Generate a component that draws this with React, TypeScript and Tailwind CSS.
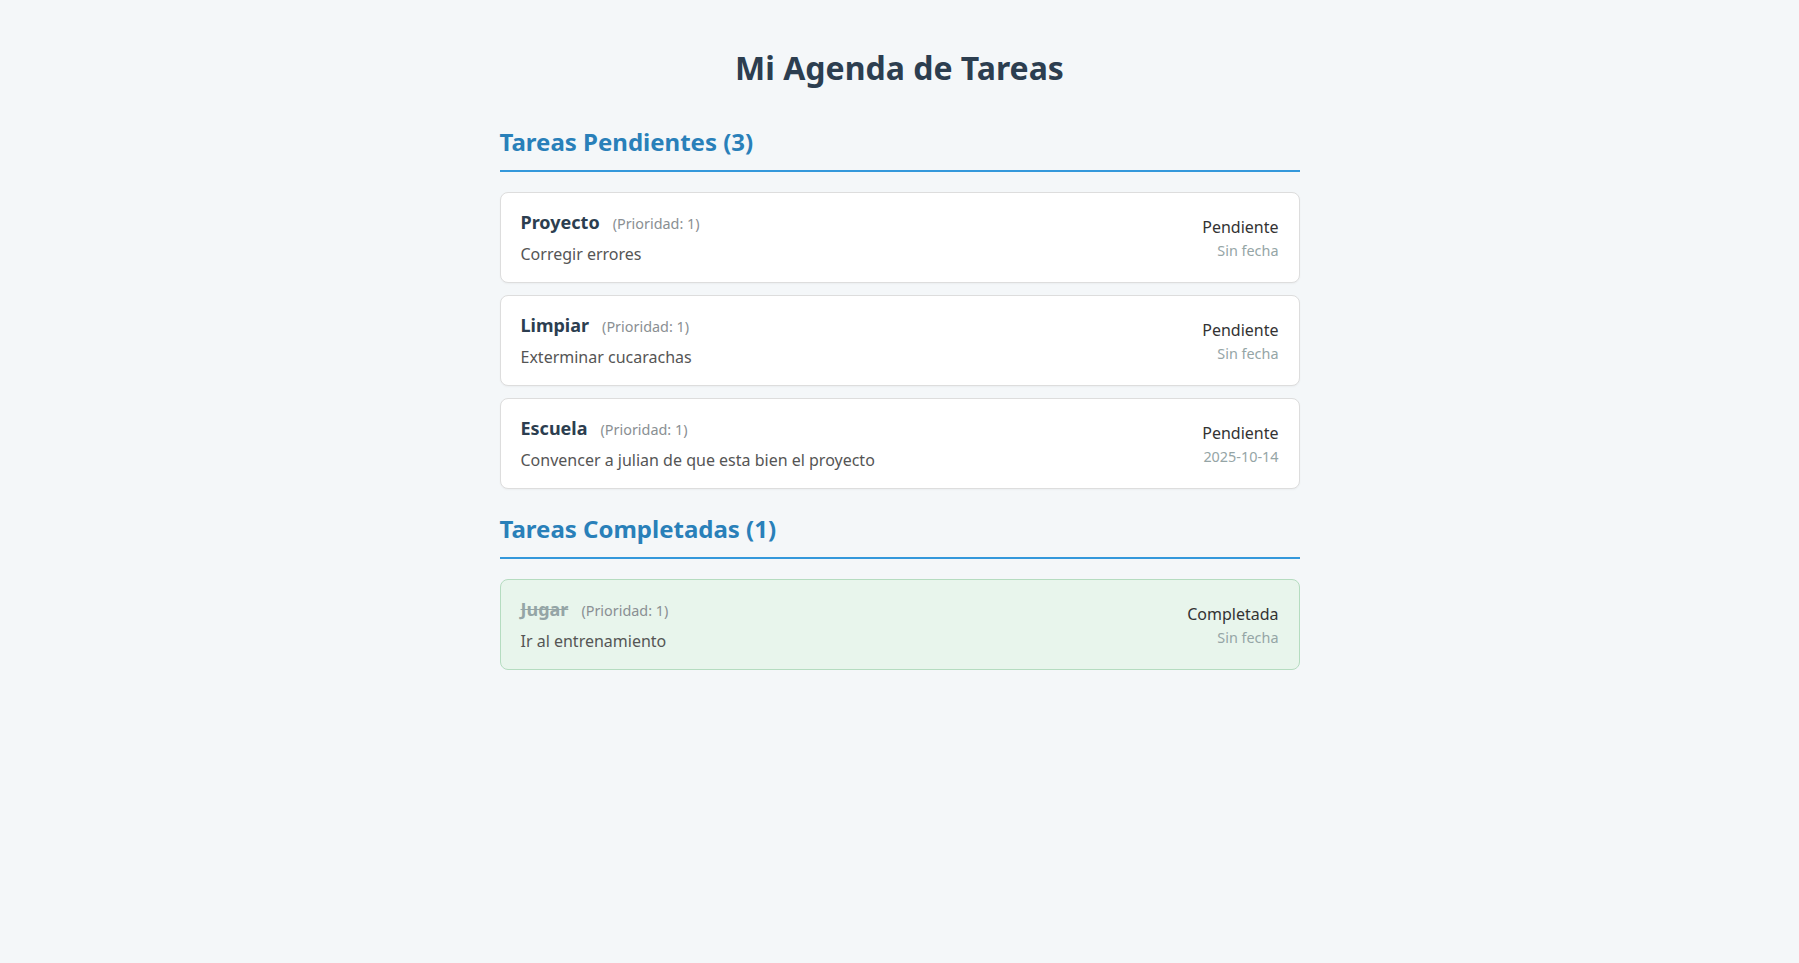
const pendientes = [
  { titulo: 'Proyecto', prioridad: 1, descripcion: 'Corregir errores', fecha: 'Sin fecha' },
  { titulo: 'Limpiar', prioridad: 1, descripcion: 'Exterminar cucarachas', fecha: 'Sin fecha' },
  { titulo: 'Escuela', prioridad: 1, descripcion: 'Convencer a julian de que esta bien el proyecto', fecha: '2025-10-14' },
]

const completadas = [
  { titulo: 'Jugar', prioridad: 1, descripcion: 'Ir al entrenamiento', fecha: 'Sin fecha' },
]

type Tarea = (typeof pendientes)[number]

function TaskCard({ tarea, done }: { tarea: Tarea; done?: boolean }) {
  return (
    <div
      className={
        done
          ? 'mb-3 flex items-center justify-between rounded-lg border border-[#b5dcc0] bg-[#e8f5ec] px-5 py-[17px]'
          : 'mb-3 flex items-center justify-between rounded-lg border border-[#dddddd] bg-white px-5 py-[17px] shadow-[0_1px_2px_rgba(0,0,0,0.04)]'
      }
    >
      <div>
        <div className="flex items-baseline">
          <span
            className={
              done
                ? 'text-[18px] leading-[normal] font-bold text-[#95a5a6] line-through'
                : 'text-[18px] leading-[normal] font-bold text-[#2c3e50]'
            }
          >
            {tarea.titulo}
          </span>
          <span className="ml-[13px] text-[14.4px] leading-[normal] text-[#8a8f93]">
            (Prioridad: {tarea.prioridad})
          </span>
        </div>
        <p className="mt-[9px] text-[16px] leading-[normal] text-[#555555]">{tarea.descripcion}</p>
      </div>
      <div className="text-right leading-[normal]">
        <div className="text-[16px] text-[#333333]">{done ? 'Completada' : 'Pendiente'}</div>
        <div className="mt-[3px] text-[14.4px] text-[#95a5a6]">{tarea.fecha}</div>
      </div>
    </div>
  )
}

function Section({ title, tareas, done, first }: { title: string; tareas: Tarea[]; done?: boolean; first?: boolean }) {
  return (
    <section className={first ? 'mt-[36px]' : 'mt-[23px]'}>
      <h2 className="mb-5 border-b-2 border-[#3498db] pb-3 text-[24px] leading-[normal] font-bold text-[#2980b9]">
        {title}
      </h2>
      {tareas.map((t) => (
        <TaskCard key={t.titulo} tarea={t} done={done} />
      ))}
    </section>
  )
}

export default function App() {
  return (
    <div
      className="min-h-screen bg-[#f4f7f9] pt-[46px]"
      style={{ fontFamily: '"Noto Sans", "Open Sans", sans-serif' }}
    >
      <div className="mx-auto w-[800px]">
        <h1 className="text-center text-[32px] leading-[normal] font-bold text-[#2c3e50]">Mi Agenda de Tareas</h1>
        <Section title={`Tareas Pendientes (${pendientes.length})`} tareas={pendientes} first />
        <Section title={`Tareas Completadas (${completadas.length})`} tareas={completadas} done />
      </div>
    </div>
  )
}
